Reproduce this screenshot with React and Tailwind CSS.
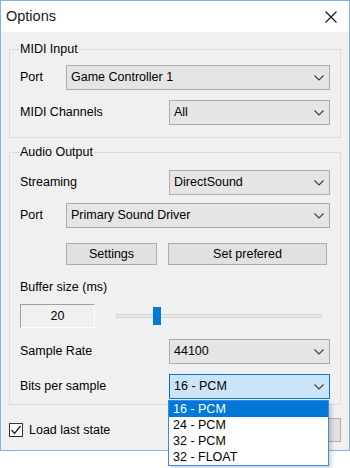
import React from "react";

const font = { fontFamily: '"Liberation Sans", Arial, sans-serif' };

function Chevron() {
  return (
    <svg width="10" height="6" viewBox="0 0 10 6" className="shrink-0">
      <path d="M0.5 0.5 L5 5 L9.5 0.5" fill="none" stroke="#3c3c3c" strokeWidth="1.1" />
    </svg>
  );
}

function Select({ value, className = "", focused = false }) {
  return (
    <div
      className={
        "h-[25px] flex items-center justify-between pl-[4px] pr-[5px] border " +
        (focused ? "bg-[#cce4f7] border-[#0078d7] " : "bg-[#e5e5e5] border-[#adadad] ") +
        className
      }
    >
      <span className="text-[12.5px] text-black leading-none">{value}</span>
      <Chevron />
    </div>
  );
}

function Row({ label, children, className = "" }) {
  return (
    <div className={"flex items-center " + className}>
      <span className="text-[12.5px] text-black">{label}</span>
      {children}
    </div>
  );
}

export default function App() {
  return (
    <div className="w-[350px] h-[468px] bg-white relative overflow-hidden" style={font}>
      <div className="w-[350px] h-[451px] border border-[#7fb2e8] flex flex-col">
        {/* Title bar */}
        <div className="h-[31px] bg-white flex items-center justify-between pl-[5px] pr-[12px] shrink-0">
          <span className="text-[14.5px] text-[#1a1a1a] mt-[1px]">Options</span>
          <svg width="12" height="12" viewBox="0 0 12 12">
            <path d="M0.5 0.5 L11.5 11.5 M11.5 0.5 L0.5 11.5" stroke="#111" strokeWidth="1.1" />
          </svg>
        </div>
        {/* Body */}
        <div className="flex-1 bg-[#f0f0f0] flex flex-col">
          <fieldset className="ml-[8px] mt-[9px] w-[332px] border border-[#dcdcdc] px-[10px] pt-[8px] pb-[12px] flex flex-col gap-[10px]">
            <legend className="px-[1px] -ml-[1px] h-[16px] leading-[16px] text-[12.5px] text-black">MIDI Input</legend>
            <Row label="Port">
              <Select value="Game Controller 1" className="ml-auto w-[264px]" />
            </Row>
            <Row label="MIDI Channels">
              <Select value="All" className="ml-auto w-[161px]" />
            </Row>
          </fieldset>

          <fieldset className="ml-[8px] mt-[6px] w-[332px] border border-[#dcdcdc] px-[10px] pt-[10px] pb-[5px] flex flex-col">
            <legend className="px-[1px] -ml-[1px] h-[16px] leading-[16px] text-[12.5px] text-black">Audio Output</legend>
            <Row label="Streaming">
              <Select value="DirectSound" className="ml-auto w-[161px]" />
            </Row>
            <Row label="Port" className="mt-[8px]">
              <Select value="Primary Sound Driver" className="ml-auto w-[264px]" />
            </Row>
            <div className="flex mt-[15px] gap-[11px] pl-[46px]">
              <div className="w-[91px] h-[22px] bg-[#e1e1e1] border border-[#adadad] flex items-center justify-center text-[12.5px] text-black">Settings</div>
              <div className="w-[159px] h-[22px] bg-[#e1e1e1] border border-[#adadad] flex items-center justify-center text-[12.5px] text-black">Set prefered</div>
            </div>
            <div className="mt-[14px] h-[16px] leading-[16px] text-[12.5px] text-black">Buffer size (ms)</div>
            <div className="mt-[9px] flex items-center">
              <div className="w-[75px] h-[24px] border-t border-l border-t-[#a0a0a0] border-l-[#a0a0a0] border-b border-r border-b-white border-r-white flex items-center justify-center text-[12.5px] text-black">20</div>
              <div className="ml-[21px] w-[206px] h-[4px] bg-[#e7eaea] border border-[#d6d6d6] relative">
                <div className="absolute left-[36px] top-[-8px] w-[8px] h-[18px] bg-[#007ad9]" />
              </div>
            </div>
            <Row label="Sample Rate" className="mt-[11px]">
              <Select value="44100" className="ml-auto w-[161px]" />
            </Row>
            <Row label="Bits per sample" className="mt-[10px]">
              <Select value="16 - PCM" focused className="ml-auto w-[161px]" />
            </Row>
          </fieldset>

          <div className="mt-[13px] flex items-center ml-[8px] mr-[8px]">
            <div className="w-[14px] h-[14px] border border-[#333] bg-white flex items-center justify-center">
              <svg width="12" height="12" viewBox="0 0 12 12">
                <path d="M1.5 6 L4.5 9.5 L10.5 2" fill="none" stroke="#222" strokeWidth="1.3" />
              </svg>
            </div>
            <span className="ml-[6px] text-[12.5px] text-black">Load last state</span>
            <div className="ml-auto w-[90px] h-[24px] bg-[#e1e1e1] border border-[#adadad] flex items-center justify-center text-[12.5px] text-black">OK</div>
          </div>
        </div>
      </div>

      {/* Open dropdown list */}
      <div className="absolute left-[168px] top-[400px] w-[161px] h-[66px] bg-white border border-[#3c8ce6] shadow-[3px_3px_3px_rgba(0,0,0,0.15)] flex flex-col">
        <div className="h-[16px] leading-[16px] pl-[4px] bg-[#0078d7] text-white text-[12.5px]">16 - PCM</div>
        <div className="h-[16px] leading-[16px] pl-[4px] text-black text-[12.5px]">24 - PCM</div>
        <div className="h-[16px] leading-[16px] pl-[4px] text-black text-[12.5px]">32 - PCM</div>
        <div className="h-[16px] leading-[16px] pl-[4px] text-black text-[12.5px]">32 - FLOAT</div>
      </div>
    </div>
  );
}
